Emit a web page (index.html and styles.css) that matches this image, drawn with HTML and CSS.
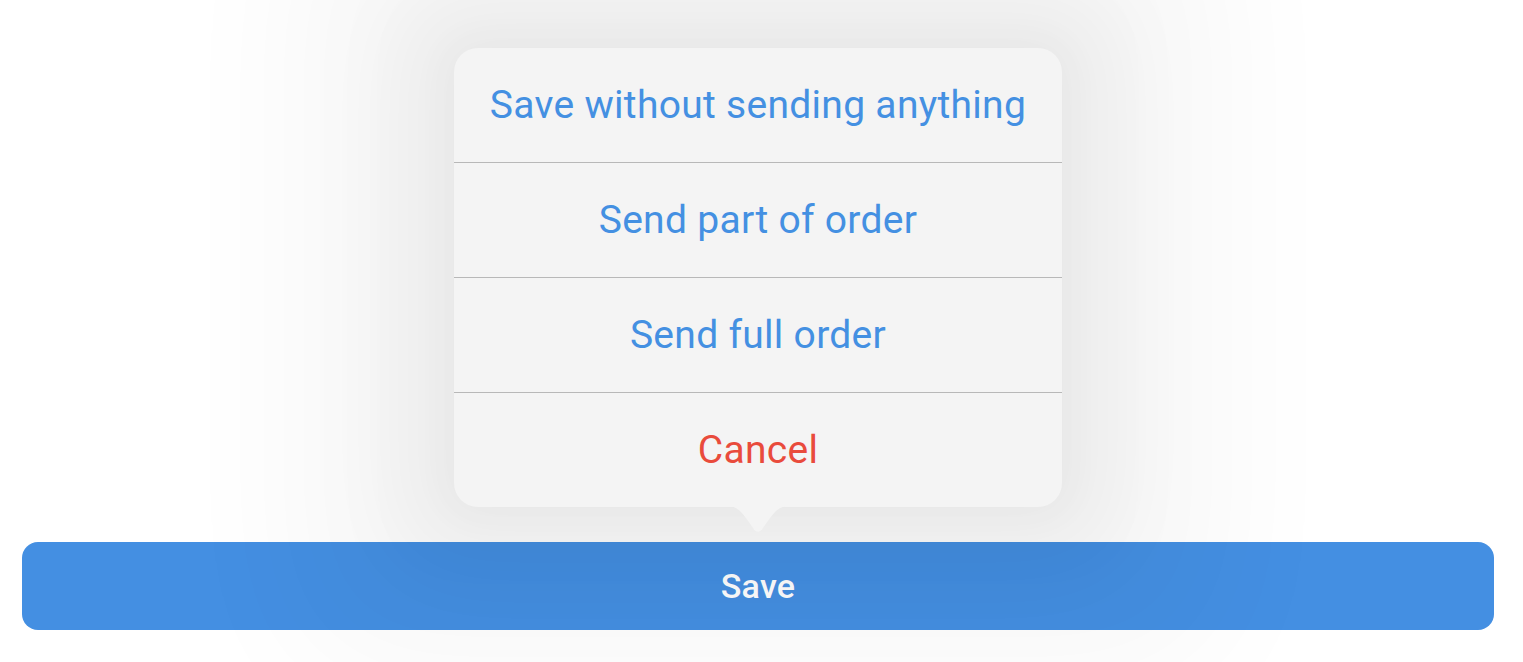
FILE: index.html
```html
<!DOCTYPE html>
<html lang="en">
<head>
    <meta charset="UTF-8">
    <meta name="viewport" content="width=device-width, initial-scale=1.0">
    <title>Save Order</title>
    <link rel="stylesheet" href="styles.css">
</head>
<body>
    <div id="app">
        <div class="actions">
            <button class="save-btn">Save</button>
        </div>

        <div class="popover">
            <div class="menu">
                <button class="menu-item">Save without sending anything</button>
                <button class="menu-item">Send part of order</button>
                <button class="menu-item">Send full order</button>
                <button class="menu-item cancel">Cancel</button>
            </div>
            <svg class="tail" width="64" height="28" viewBox="0 0 64 28">
                <path d="M0 0 H64 C54 0 50 4 44 12 L37 22 C34 27 30 27 27 22 L20 12 C14 4 10 0 0 0 Z" fill="#f4f4f4"/>
            </svg>
        </div>
    </div>
</body>
</html>
```

FILE: styles.css
```css
body {
    margin: 0;
    height: 662px;
    overflow: hidden;
    font-family: 'Roboto', 'Inter', sans-serif;
    background-color: #ffffff;
}

#app {
    position: relative;
    height: 662px;
}

.actions {
    padding: 542px 29px 0 22px;
}

.save-btn {
    display: block;
    width: 100%;
    height: 88px;
    border: none;
    border-radius: 16px;
    background-color: #448fe2;
    color: #ffffff;
    font-family: inherit;
    font-size: 34px;
    font-weight: 500;
    letter-spacing: 0.3px;
    cursor: pointer;
}

.popover {
    position: absolute;
    left: 454px;
    top: 48px;
    width: 608px;
}

.menu {
    position: relative;
    background-color: #f4f4f4;
    border-radius: 24px;
    overflow: hidden;
    box-shadow: 0 0 140px 160px rgba(0, 0, 0, 0.035),
                0 0 80px 60px rgba(0, 0, 0, 0.045),
                0 0 40px 10px rgba(0, 0, 0, 0.025);
}

.menu-item {
    display: block;
    width: 100%;
    height: 115px;
    border: none;
    border-top: 1px solid #b8b8b8;
    background: none;
    color: #4490e2;
    font-family: inherit;
    font-size: 39px;
    letter-spacing: 0.3px;
    cursor: pointer;
}

.menu-item:first-child {
    height: 114px;
    border-top: none;
}

.menu-item.cancel {
    color: #e94b3c;
}

.tail {
    display: block;
    position: relative;
    margin: -1px auto 0;
}
```
